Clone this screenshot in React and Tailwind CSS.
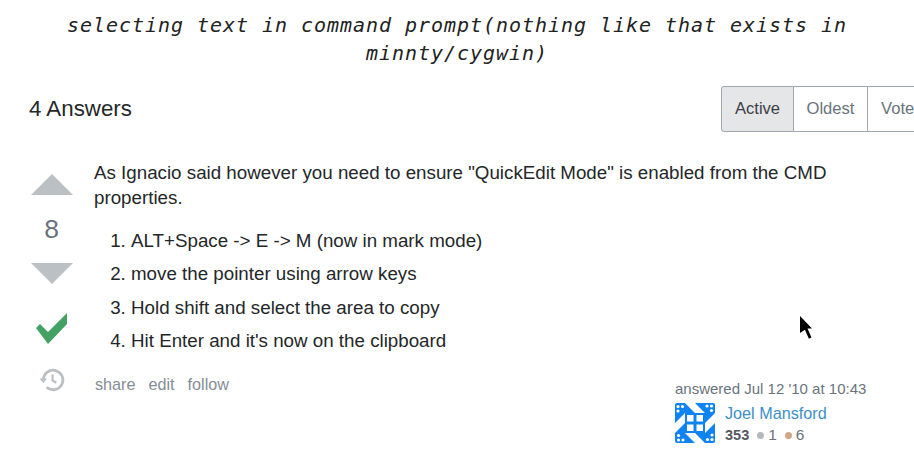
const sans = { fontFamily: '"Liberation Sans", Arial, sans-serif' };

function Identicon() {
    const quadrant = (
        <>
            <path d="M10 0h10v10zM0 20h10V10z" fill="#ffffff" />
            <rect x="12" y="12" width="6.5" height="6.5" fill="#ffffff" />
            <g fill="#ffffff">
                <circle cx="3" cy="3.5" r="1.6" /><circle cx="7.5" cy="3.5" r="1.6" /><circle cx="3" cy="8" r="1.6" />
            </g>
        </>
    );

    return (
        <svg width="40" height="40" viewBox="0 0 40 40" className="block">
            <rect width="40" height="40" rx="2" fill="#0f83f0" />
            <g>{quadrant}</g>
            <g transform="rotate(90 20 20)">{quadrant}</g>
            <g transform="rotate(180 20 20)">{quadrant}</g>
            <g transform="rotate(270 20 20)">{quadrant}</g>
        </svg>
    );
}

export default function App() {
    const steps = [
        'ALT+Space -> E -> M (now in mark mode)',
        'move the pointer using arrow keys',
        'Hold shift and select the area to copy',
        "Hit Enter and it's now on the clipboard",
    ];

    return (
        <div className="relative w-[914px] h-[473px] overflow-hidden bg-white text-[#242729]" style={sans}>
            <h1 className="pt-[11px] px-[40px] text-center text-[20px] leading-[28px] tracking-[0.96px] italic font-normal text-[#222]" style={{ fontFamily: '"DejaVu Sans Mono", monospace' }}>
                selecting text in command prompt(nothing like that exists in minnty/cygwin)
            </h1>

            <div className="flex items-center mt-[19px] pl-[29px] h-[46px]">
                <h2 className="text-[22.3px] font-normal">4 Answers</h2>
                <div className="flex shrink-0 ml-auto mr-[-14px] w-[207px] h-[46px] text-[16.6px] text-[#6a737c]">
                    <div className="flex items-center justify-center shrink-0 w-[73px] bg-[#e4e6e8] border border-[#9fa6ad] rounded-l-[3px] text-[#3b4045]">Active</div>
                    <div className="flex items-center justify-center shrink-0 w-[74px] border-y border-r border-[#9fa6ad]">Oldest</div>
                    <div className="pl-[13px] flex items-center shrink-0 w-[60px] border-y border-[#9fa6ad]">Votes</div>
                </div>
            </div>

            <div className="flex mt-[15px]">
                <div className="flex flex-col items-center w-[94px] pl-[9px] shrink-0 pt-[27px]">
                    <svg width="42" height="21" viewBox="0 0 42 21" className="shrink-0"><path d="M21 0l21 21H0z" fill="#bbc0c4" /></svg>
                    <div className="text-[26.5px] leading-[34px] mt-[17px] text-[#6a737c]">8</div>
                    <svg width="42" height="21" viewBox="0 0 42 21" className="mt-[17px] shrink-0"><path d="M0 0h42L21 21z" fill="#bbc0c4" /></svg>
                    <svg width="31" height="31" viewBox="0 0 31 31" className="mt-[29px] shrink-0"><path d="M0 15l4-4 8 8L31 0v11L12 31z" fill="#45a163" /></svg>
                    <svg width="26" height="26" viewBox="0 0 24 24" fill="none" stroke="#bbc0c4" strokeWidth="2.6" className="mt-[23px] shrink-0">
                        <path d="M4 12a9 9 0 1 1 3 6.7" />
                        <path d="M0.5 10.5h7L4 15z" fill="#bbc0c4" stroke="none" />
                        <path d="M12.5 7v5.5l3.5 2" strokeWidth="2" />
                    </svg>
                </div>

                <div className="flex-1 pt-[13px] pr-[60px] text-[18.75px] leading-[25px]">
                    <p>As Ignacio said however you need to ensure "QuickEdit Mode" is enabled from the CMD properties.</p>
                    <ol className="mt-[18px] pl-[37px] list-decimal">
                        {steps.map((s) => (
                            <li key={s} className="mb-[8.4px]">{s}</li>
                        ))}
                    </ol>
                    <div className="flex gap-[13px] mt-[21px] pl-[1px] text-[16.2px] leading-[20px] text-[#848d95]">
                        <span>share</span><span>edit</span><span>follow</span>
                    </div>
                </div>
            </div>

            <div className="absolute left-[675px] top-[380px] text-[15px] leading-[18px] text-[#6a737c]">
                <div>answered Jul 12 '10 at 10:43</div>
                <div className="flex mt-[5px]">
                    <Identicon />
                    <div className="ml-[10px] -mt-[1px]">
                        <div className="text-[16.2px] leading-[22px] text-[#3d8fc7]">Joel Mansford</div>
                        <div className="flex items-center text-[14.5px] leading-[20px] mt-[1px]">
                            <b className="font-bold text-[#535a60]">353</b>
                            <span className="w-[7px] h-[7px] rounded-full bg-[#b4b8bc] ml-[8px]" />
                            <span className="ml-[4px] text-[15.5px]">1</span>
                            <span className="w-[7px] h-[7px] rounded-full bg-[#d1a684] ml-[8px]" />
                            <span className="ml-[4px] text-[15.5px]">6</span>
                        </div>
                    </div>
                </div>
            </div>

            {/* mouse pointer left in the capture */}
            <svg width="14" height="24" viewBox="0 0 14 24" className="absolute left-[800px] top-[316px]">
                <path d="M0 0l12 12.5H7.5l4 9-2.6 1.2-4-9L0 17z" fill="#000" />
            </svg>
        </div>
    );
}
